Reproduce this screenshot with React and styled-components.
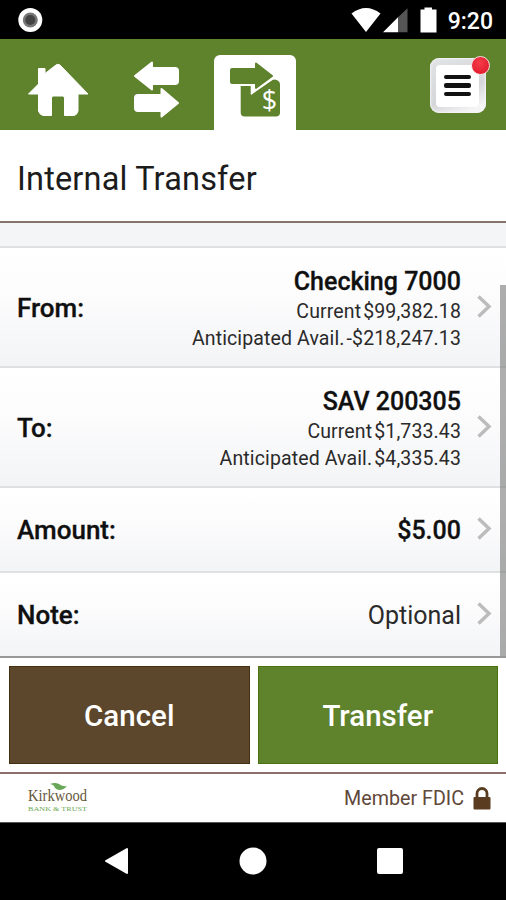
import React from "react";
import styled, { createGlobalStyle, css } from "styled-components";

const GlobalStyle = createGlobalStyle`
  * {
    box-sizing: border-box;
  }
  body {
    margin: 0;
    background: #ffffff;
    font-family: Roboto, "Liberation Sans", sans-serif;
    color: #101010;
  }
  svg {
    display: block;
    overflow: visible;
  }
`;

const Screen = styled.div`
  width: 506px;
  height: 900px;
  display: flex;
  flex-direction: column;
  overflow: hidden;
`;

const StatusBar = styled.div`
  height: 39px;
  flex: none;
  display: flex;
  align-items: center;
  justify-content: space-between;
  padding: 0 13px 0 18px;
  background: #000000;
`;

const StatusIcons = styled.div`
  display: flex;
  align-items: center;
`;

const Clock = styled.span`
  margin-left: 11px;
  padding-top: 5px;
  color: #ffffff;
  font-size: 23px;
  line-height: 26px;
  font-weight: 500;
`;

const NavBar = styled.nav`
  height: 91px;
  flex: none;
  display: flex;
  align-items: flex-end;
  background: #5f822d;
`;

const NavTab = styled.button`
  width: ${(props) => props.$width}px;
  height: 75px;
  padding: 0;
  border: 0;
  border-radius: 6px 6px 0 0;
  background: ${(props) => (props.$active ? "#ffffff" : "transparent")};
  cursor: pointer;
`;

const MenuButton = styled.button`
  position: relative;
  width: 56px;
  height: 55px;
  margin: 0 20px 17px auto;
  padding: 6px 7px 6px 6px;
  border: 0;
  border-radius: 9px;
  background: linear-gradient(155deg, #e2e3e5, #d5d6d9 60%, #f5f5f6 88%);
  box-shadow: inset 0 0 2px 1px #f4f4f4;
  cursor: pointer;
`;

const MenuFace = styled.span`
  display: flex;
  flex-direction: column;
  align-items: center;
  justify-content: center;
  gap: 4px;
  height: 42px;
  border-radius: 4px;
  background: #ffffff;
`;

const MenuLine = styled.span`
  width: 27px;
  height: 4.5px;
  border-radius: 2px;
  background: #111111;
`;

const Badge = styled.span`
  position: absolute;
  top: -2px;
  right: -4px;
  width: 19px;
  height: 19px;
  border: 1.5px solid #f6dcdc;
  border-radius: 50%;
  background: radial-gradient(circle at 45% 35%, #f53c48, #da1428);
`;

const Title = styled.h1`
  height: 93px;
  flex: none;
  margin: 0;
  padding: 3px 17px 0;
  border-bottom: 2px solid #86736c;
  color: #1c1c1c;
  font-size: 32.5px;
  font-weight: 400;
  line-height: 92px;
  letter-spacing: 0.18px;
`;

const Form = styled.main`
  position: relative;
  height: 435px;
  flex: none;
  padding-top: 23px;
  border-bottom: 2px solid #999796;
  background: #f4f5f7;
`;

const Row = styled.div`
  height: ${(props) => (props.$tall ? 120 : 85)}px;
  display: flex;
  align-items: center;
  padding: 0 15px 0 17px;
  border-top: 2px solid #dfe0e2;
  background: linear-gradient(#ffffff, #fcfcfd 40%, #f3f4f6);
`;

const Label = styled.span`
  flex: 1;
  padding-top: 1px;
  font-size: 26px;
  line-height: 30px;
  font-weight: 500;
  -webkit-text-stroke: 0.3px;
`;

const Values = styled.div`
  display: flex;
  flex-direction: column;
  align-items: flex-end;
  margin-right: 16px;
  padding-top: 3px;
`;

const Value = styled.span`
  color: ${(props) => (props.$light ? "#2a2a2a" : "#101010")};
  font-size: 25px;
  line-height: 32px;
  font-weight: ${(props) => (props.$light ? 400 : 500)};
  -webkit-text-stroke: ${(props) => (props.$light ? 0 : "0.3px")};
`;

const Detail = styled.span`
  display: flex;
  gap: 2px;
  font-size: 19.5px;
  line-height: 27px;
  font-weight: 400;
  letter-spacing: 0.12px;
  color: #2a2a2a;
`;

const RowChevron = styled.svg`
  margin-bottom: 2px;
`;

const ScrollThumb = styled.div`
  position: absolute;
  top: 62px;
  right: 0;
  bottom: 0;
  width: 6px;
  background: rgba(120, 120, 120, 0.6);
`;

const Actions = styled.div`
  height: 116px;
  flex: none;
  display: flex;
  gap: 8px;
  padding: 8px 8px 9px 9px;
  border-bottom: 2px solid #8b706b;
`;

const button = css`
  flex: 1;
  height: 98px;
  padding: 2px 0 0;
  color: #ffffff;
  font-family: inherit;
  font-size: 29.5px;
  font-weight: 500;
  cursor: pointer;
`;

const CancelButton = styled.button`
  ${button}
  border: 1px solid #44300f;
  background: #5d472c;
`;

const TransferButton = styled.button`
  ${button}
  border: 1px solid #4c7110;
  background: #5f822d;
`;

const Footer = styled.footer`
  height: 48px;
  flex: none;
  display: flex;
  align-items: center;
  justify-content: space-between;
  padding: 0 15px 0 27px;
`;

const Member = styled.div`
  display: flex;
  align-items: center;
  gap: 9px;
  color: #5f483a;
  font-size: 19.7px;
  font-weight: 400;
`;

const SystemNav = styled.div`
  flex: 1;
  display: flex;
  align-items: center;
  justify-content: center;
  gap: 110px;
  padding-bottom: 2px;
  border-top: 1px solid #555555;
  background: #000000;
`;

const HomeIcon = () => (
  <svg width="117" height="75" viewBox="0 55 117 75">
    <path
      fill="#fff"
      stroke="#fff"
      strokeWidth="1"
      strokeLinejoin="round"
      d="M38.500 68.500h6.500v5L56 65q2-1.500 4 0L88 94H78v17q-1 4-4 4.500h-9.500V98q0-2-2-2h-9q-2 0-2 2v17.500H43q-3.500-1-4.500-4.500V94H28.500l10-10z"
    />
  </svg>
);

const ArrowsIcon = () => (
  <svg width="97" height="75" viewBox="117 55 97 75">
    <path
      fill="#fff"
      stroke="#fff"
      strokeWidth="2"
      strokeLinejoin="round"
      d="M135 76l17-13.500V68h23q3 0 3 3v10q0 3-3 3h-23v5.500zM178 103l-16.500 13.500V111H138q-3 0-3-3V98q0-3 3-3h23.500v-6z"
    />
  </svg>
);

const TransferIcon = () => (
  <svg width="82" height="75" viewBox="214 55 82 75">
    <path
      fill="#5f822d"
      stroke="#5f822d"
      strokeWidth="2"
      strokeLinejoin="round"
      d="M232 69h24v-5.500L272 76l-16 12v-5h-24q-1 0-1-1V70q0-1 1-1z"
    />
    <path
      fill="#5f822d"
      d="M240.700 86h10v8.500l22-15q7.300 0 7.300 5v28q0 4-4 4h-31.300q-4 0-4-4z"
    />
    <path fill="none" stroke="#fff" strokeWidth="2" d="M252 85v8l21-14.500" />
    <text
      x="269.500"
      y="110"
      textAnchor="middle"
      fill="#fff"
      fontFamily="Open Sans"
      fontSize="27"
    >
      $
    </text>
  </svg>
);

const Chevron = () => (
  <RowChevron width="14" height="23" viewBox="0 0 14 23">
    <path
      d="M1.500 1.500L12 11.500 1.500 21.500"
      fill="none"
      stroke="#bcbcbc"
      strokeWidth="3.500"
    />
  </RowChevron>
);

const BankLogo = () => (
  <svg width="64" height="38" viewBox="27 779 64 38">
    <path fill="#69a758" d="M50 784q5-2 9 0 4 3 8 2-3 4-8 4-4-1-5-4-2-2-4-2z" />
    <text
      x="28"
      y="801"
      fill="#66583a"
      fontFamily="Liberation Serif"
      fontSize="17.500"
      textLength="59"
      lengthAdjust="spacingAndGlyphs"
    >
      Kirkwood
    </text>
    <text
      x="28"
      y="811"
      fill="#6eaa55"
      fontFamily="Liberation Serif"
      fontSize="6.500"
      textLength="59"
      lengthAdjust="spacingAndGlyphs"
    >
      BANK &amp; TRUST
    </text>
  </svg>
);

const accounts = [
  {
    label: "From:",
    name: "Checking 7000",
    current: "$99,382.18",
    available: "-$218,247.13",
  },
  {
    label: "To:",
    name: "SAV 200305",
    current: "$1,733.43",
    available: "$4,335.43",
  },
];

const App = () => {
  return (
    <Screen>
      <GlobalStyle />
      <StatusBar>
        <svg width="25" height="25" viewBox="0 0 25 25">
          <circle cx="12.300" cy="13" r="12" fill="#fff" />
          <circle cx="12.300" cy="13" r="7.500" fill="#777" />
          <circle cx="12.300" cy="13" r="5" fill="#444" />
        </svg>
        <StatusIcons>
          <svg width="86" height="26" viewBox="351 7 86 26">
            <path fill="#fff" d="M351.500 13.500q14.500-11 29 0L366 32z" />
            <path fill="#fff" d="M383 32.300l15-15v15z" />
            <path fill="#555" d="M398 17.300l9.500-9v24H398z" />
            <path
              fill="#fff"
              d="M424.500 7.500h7.500v2h4.500v23H420.500v-23h4z"
            />
          </svg>
          <Clock>9:20</Clock>
        </StatusIcons>
      </StatusBar>

      <NavBar>
        <NavTab $width={117}>
          <HomeIcon />
        </NavTab>
        <NavTab $width={97}>
          <ArrowsIcon />
        </NavTab>
        <NavTab $width={82} $active>
          <TransferIcon />
        </NavTab>
        <MenuButton>
          <MenuFace>
            <MenuLine />
            <MenuLine />
            <MenuLine />
          </MenuFace>
          <Badge />
        </MenuButton>
      </NavBar>

      <Title>Internal Transfer</Title>

      <Form>
        {accounts.map((account) => (
          <Row key={account.label} $tall>
            <Label>{account.label}</Label>
            <Values>
              <Value>{account.name}</Value>
              <Detail>
                <span>Current</span>
                <span>{account.current}</span>
              </Detail>
              <Detail>
                <span>Anticipated Avail.</span>
                <span>{account.available}</span>
              </Detail>
            </Values>
            <Chevron />
          </Row>
        ))}
        <Row>
          <Label>Amount:</Label>
          <Values>
            <Value>$5.00</Value>
          </Values>
          <Chevron />
        </Row>
        <Row>
          <Label>Note:</Label>
          <Values>
            <Value $light>Optional</Value>
          </Values>
          <Chevron />
        </Row>
        <ScrollThumb />
      </Form>

      <Actions>
        <CancelButton>Cancel</CancelButton>
        <TransferButton>Transfer</TransferButton>
      </Actions>

      <Footer>
        <BankLogo />
        <Member>
          <span>Member FDIC</span>
          <svg width="18" height="23" viewBox="0 0 18 23">
            <path
              d="M4 11V6.500a5 5 0 0 1 10 0V11"
              fill="none"
              stroke="#5a3d20"
              strokeWidth="2.800"
            />
            <rect x="0.500" y="10" width="17" height="12.500" rx="1" fill="#5a3d20" />
          </svg>
        </Member>
      </Footer>

      <SystemNav>
        <svg width="25" height="28" viewBox="0 0 25 28">
          <path
            d="M2 14L23 2v24z"
            fill="#fff"
            stroke="#fff"
            strokeWidth="2"
            strokeLinejoin="round"
          />
        </svg>
        <svg width="28" height="28" viewBox="0 0 28 28">
          <circle cx="14" cy="14" r="13.500" fill="#fff" />
        </svg>
        <svg width="26" height="26" viewBox="0 0 26 26">
          <rect width="26" height="26" rx="2" fill="#fff" />
        </svg>
      </SystemNav>
    </Screen>
  );
};

export default App;
